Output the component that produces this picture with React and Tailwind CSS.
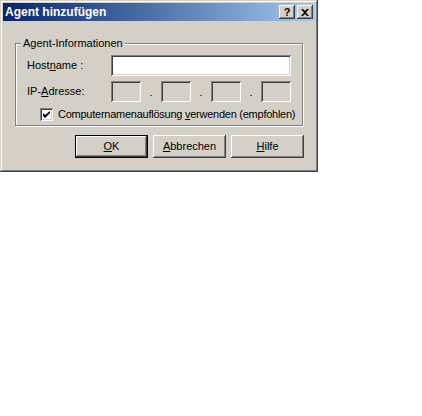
import { useState } from "react";

// Klassischer Windows-Dialog "Agent hinzufügen"
const raised =
  "shadow-[inset_-1px_-1px_0_#404040,inset_1px_1px_0_#ffffff,inset_-2px_-2px_0_#808080,inset_2px_2px_0_#d4d0c8]";
const sunken =
  "shadow-[inset_1px_1px_0_#808080,inset_-1px_-1px_0_#ffffff,inset_2px_2px_0_#404040,inset_-2px_-2px_0_#d4d0c8]";

const Key = ({ children }) => <span className="underline underline-offset-[1px]">{children}</span>;

const DialogButton = ({ children, isDefault }) => (
  <button
    className={`w-[73px] h-[23px] bg-[#d4d0c8] text-black flex items-center justify-center ${
      isDefault
        ? "border border-black shadow-[inset_-1px_-1px_0_#404040,inset_1px_1px_0_#ffffff,inset_-2px_-2px_0_#808080]"
        : raised
    }`}
  >
    {children}
  </button>
);

const TitleButton = ({ children }) => (
  <div
    className={`w-[16px] h-[14px] bg-[#d4d0c8] flex items-center justify-center text-[11px] font-bold leading-none text-black ${raised}`}
  >
    {children}
  </div>
);

const IpBox = () => <div className={`w-[30px] h-[21px] bg-[#d4d0c8] ${sunken}`} />;

const Dot = () => (
  <div className="w-[20px] h-[21px] flex items-end justify-center pb-[4px] leading-none text-black">.</div>
);

export default function App() {
  const [checked, setChecked] = useState(true);
  const [host, setHost] = useState("");

  return (
    <div
      className="w-[422px] h-[416px] bg-white text-[11px] text-black"
      style={{ fontFamily: '"Liberation Sans", Arial, sans-serif' }}
    >
      <div className="w-[318px] h-[172px] bg-[#d4d0c8] p-[3px] shadow-[inset_-1px_-1px_0_#404040,inset_1px_1px_0_#d4d0c8,inset_-2px_-2px_0_#808080,inset_2px_2px_0_#ffffff]">
        <div className="h-[18px] flex items-center justify-between pl-[2px] pr-[2px] bg-gradient-to-r from-[#0a246a] to-[#a6caf0]">
          <span className="text-white font-bold text-[12px] leading-none">Agent hinzufügen</span>
          <div className="flex gap-[2px]">
            <TitleButton>?</TitleButton>
            <TitleButton>
              <svg width="8" height="7" viewBox="0 0 8 7">
                <path d="M0 0h2l2 2 2-2h2L5 3.5 8 7H6L4 5 2 7H0l3-3.5z" fill="#000" />
              </svg>
            </TitleButton>
          </div>
        </div>

        <div className="pl-[12px] pt-[22px]">
          <div className="relative w-[288px] h-[83px] border border-[#808080] shadow-[inset_1px_1px_0_#ffffff,1px_1px_0_#ffffff] pl-[11px] pt-[11px]">
            <span className="absolute -top-[7px] left-[5px] px-[2px] bg-[#d4d0c8] leading-[13px]">
              Agent-Informationen
            </span>

            <div className="flex items-center h-[21px]">
              <span className="w-[84px]">
                Host<Key>n</Key>ame :
              </span>
              <input
                value={host}
                onChange={(e) => setHost(e.target.value)}
                className={`w-[180px] h-[21px] bg-white outline-none px-[3px] ${sunken}`}
              />
            </div>

            <div className="flex items-center h-[21px] mt-[5px]">
              <span className="w-[84px]">
                IP-<Key>A</Key>dresse:
              </span>
              <IpBox />
              <Dot />
              <IpBox />
              <Dot />
              <IpBox />
              <Dot />
              <IpBox />
            </div>

            <label className="flex items-center mt-[6px] pl-[13px] h-[13px] cursor-default">
              <span
                onClick={() => setChecked(!checked)}
                className={`shrink-0 w-[13px] h-[13px] bg-white flex items-center justify-center ${sunken}`}
              >
                {checked && (
                  <svg width="7" height="7" viewBox="0 0 7 7">
                    <path d="M0 2v3l2 2 5-5V-0L2 4z" fill="#000" />
                  </svg>
                )}
              </span>
              <span className="ml-[5px] whitespace-nowrap tracking-[-0.25px]">
                Computernamenauflösung <Key>v</Key>erwenden (empfohlen)
              </span>
            </label>
          </div>

          <div className="flex gap-[5px] pl-[60px] mt-[9px]">
            <DialogButton isDefault>
              <Key>O</Key>K
            </DialogButton>
            <DialogButton>
              <Key>A</Key>bbrechen
            </DialogButton>
            <DialogButton>
              <Key>H</Key>ilfe
            </DialogButton>
          </div>
        </div>
      </div>
    </div>
  );
}
